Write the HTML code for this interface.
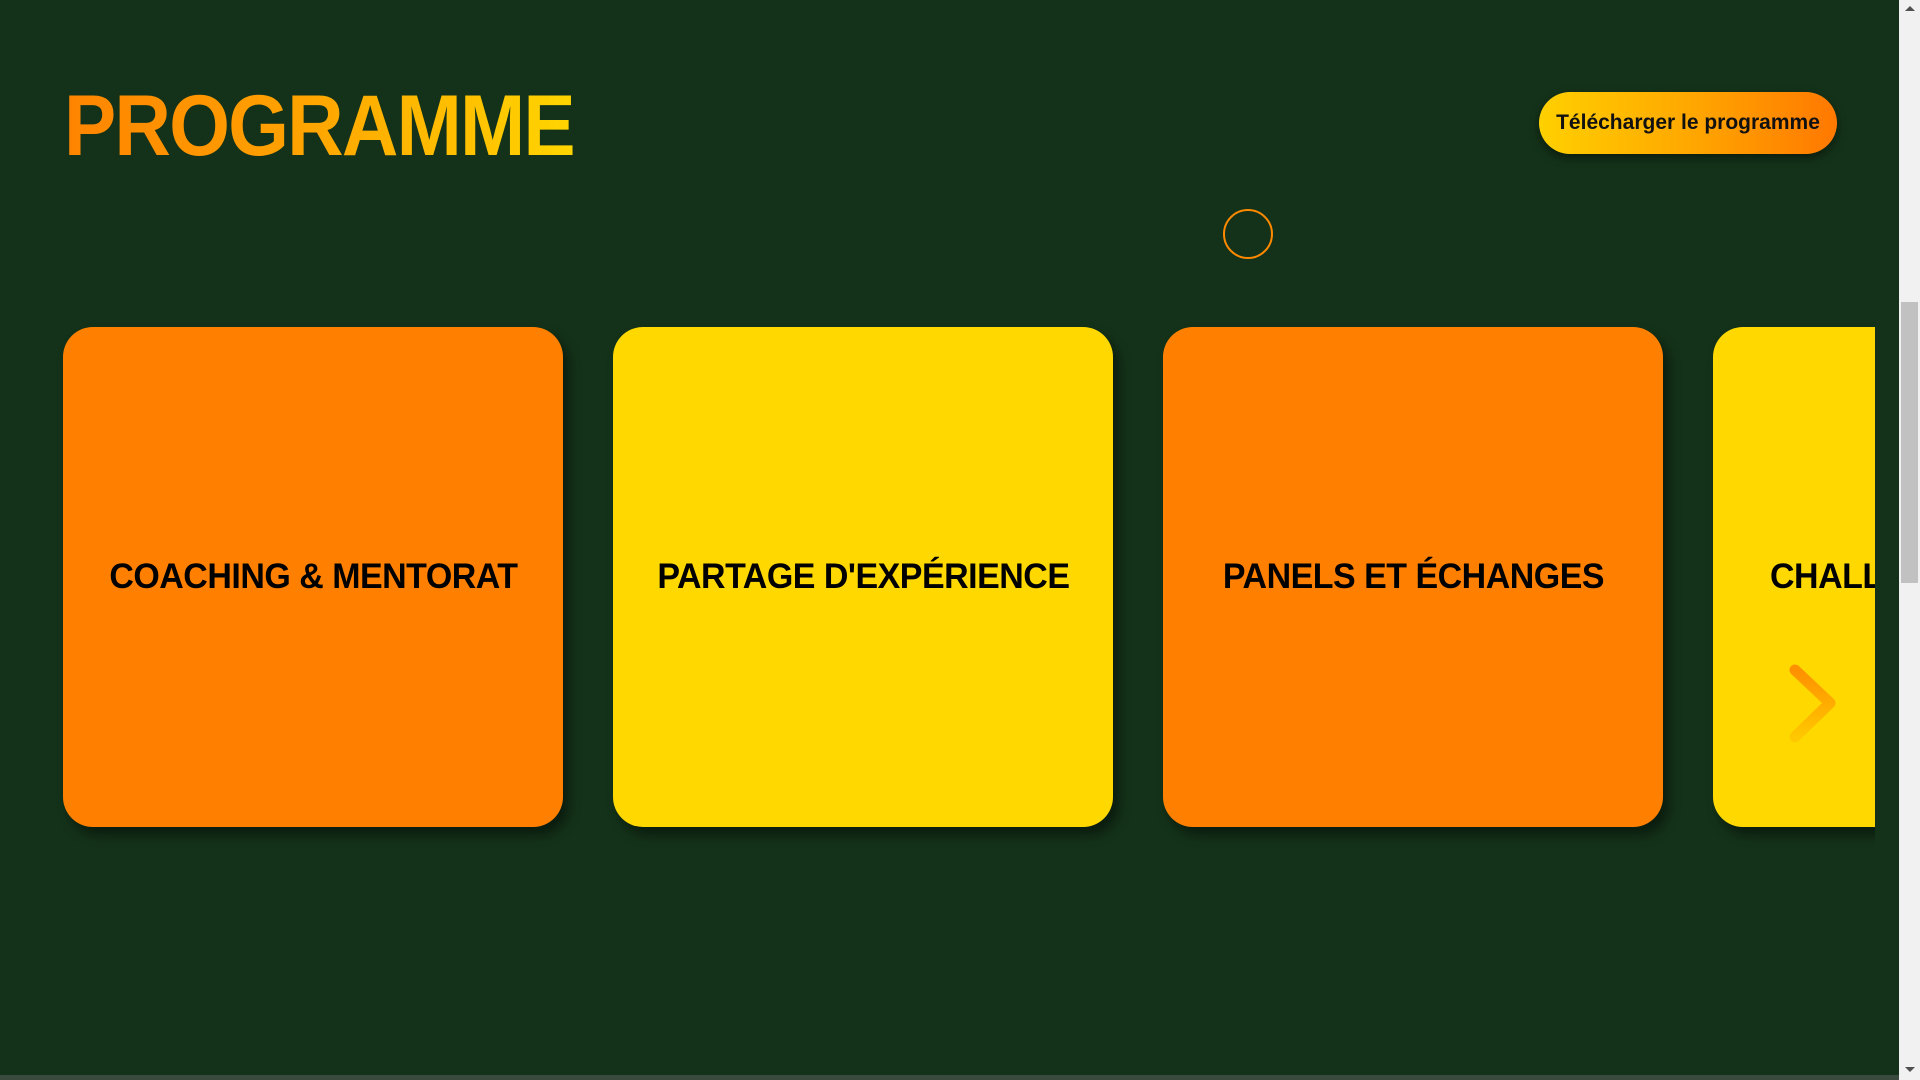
<!DOCTYPE html>
<html><head><meta charset="utf-8"><style>
html,body{margin:0;padding:0;width:1920px;height:1080px;overflow:hidden;background:#143219;font-family:"Liberation Sans",sans-serif;}
.title{position:absolute;left:64px;top:83px;font-size:86px;font-weight:bold;line-height:86px;letter-spacing:-2px;
 background:linear-gradient(90deg,#ff8400 0%,#ffa200 45%,#ffd500 100%);-webkit-background-clip:text;background-clip:text;color:transparent;
 transform-origin:left top;transform:scaleX(0.91);}
.btn{position:absolute;left:1539px;top:92px;width:298px;height:62px;border-radius:31px;background:linear-gradient(90deg,#ffd000,#ffa800 50%,#ff7800);
 box-shadow:0 4px 10px rgba(0,0,0,.45);display:flex;align-items:center;justify-content:center;font-weight:bold;font-size:21px;color:#111;}
.circ{position:absolute;left:1223px;top:209px;width:46px;height:46px;border:2px solid #ff8a00;border-radius:50%;}
.viewport{position:absolute;left:0;top:300px;width:1875px;height:600px;overflow:hidden;}
.card{position:absolute;top:27px;width:500px;height:500px;border-radius:30px;box-shadow:6px 8px 12px rgba(0,0,0,.45);
 display:flex;align-items:center;justify-content:center;font-weight:bold;font-size:35px;color:#000;letter-spacing:-0.5px;white-space:nowrap;}
.card span{display:inline-block;transform:scaleX(0.97);}
.o{background:#ff8000}.y{background:#ffd800}
.sb{position:absolute;left:1899px;top:0;width:21px;height:1080px;background:#f1f1f1;}
.thumb{position:absolute;left:2px;top:302px;width:17px;height:281px;background:#c1c1c1;}
.bot{position:absolute;left:0;top:1075px;width:1899px;height:5px;background:#3a4a3c;}
</style></head><body>
<div class="title">PROGRAMME</div>
<div class="btn">Télécharger le programme</div>
<div class="circ"></div>
<div class="viewport">
 <div class="card o" style="left:63px"><span>COACHING &amp; MENTORAT</span></div>
 <div class="card y" style="left:613px"><span>PARTAGE D'EXPÉRIENCE</span></div>
 <div class="card o" style="left:1163px"><span>PANELS ET ÉCHANGES</span></div>
 <div class="card y" style="left:1713px;justify-content:flex-start;padding-left:57px;box-sizing:border-box"><span style="transform-origin:left">CHALLENGES</span></div>
</div>
<svg style="position:absolute;left:1780px;top:655px" width="70" height="100">
 <defs><linearGradient id="g" x1="0" y1="0" x2="0" y2="1"><stop offset="0" stop-color="#ff9000"/><stop offset="1" stop-color="#ffc800"/></linearGradient></defs>
 <path d="M15 15 L50 48 L15 82" fill="none" stroke="url(#g)" stroke-width="11" stroke-linecap="round" stroke-linejoin="round"/>
</svg>
<div class="bot"></div>
<div class="sb"><div class="thumb"></div>
 <div style="position:absolute;left:6px;top:6px;width:0;height:0;border-left:5px solid transparent;border-right:5px solid transparent;border-bottom:5px solid #505050"></div>
 <div style="position:absolute;left:6px;top:1067px;width:0;height:0;border-left:5px solid transparent;border-right:5px solid transparent;border-top:5px solid #505050"></div>
</div>
</body></html>
